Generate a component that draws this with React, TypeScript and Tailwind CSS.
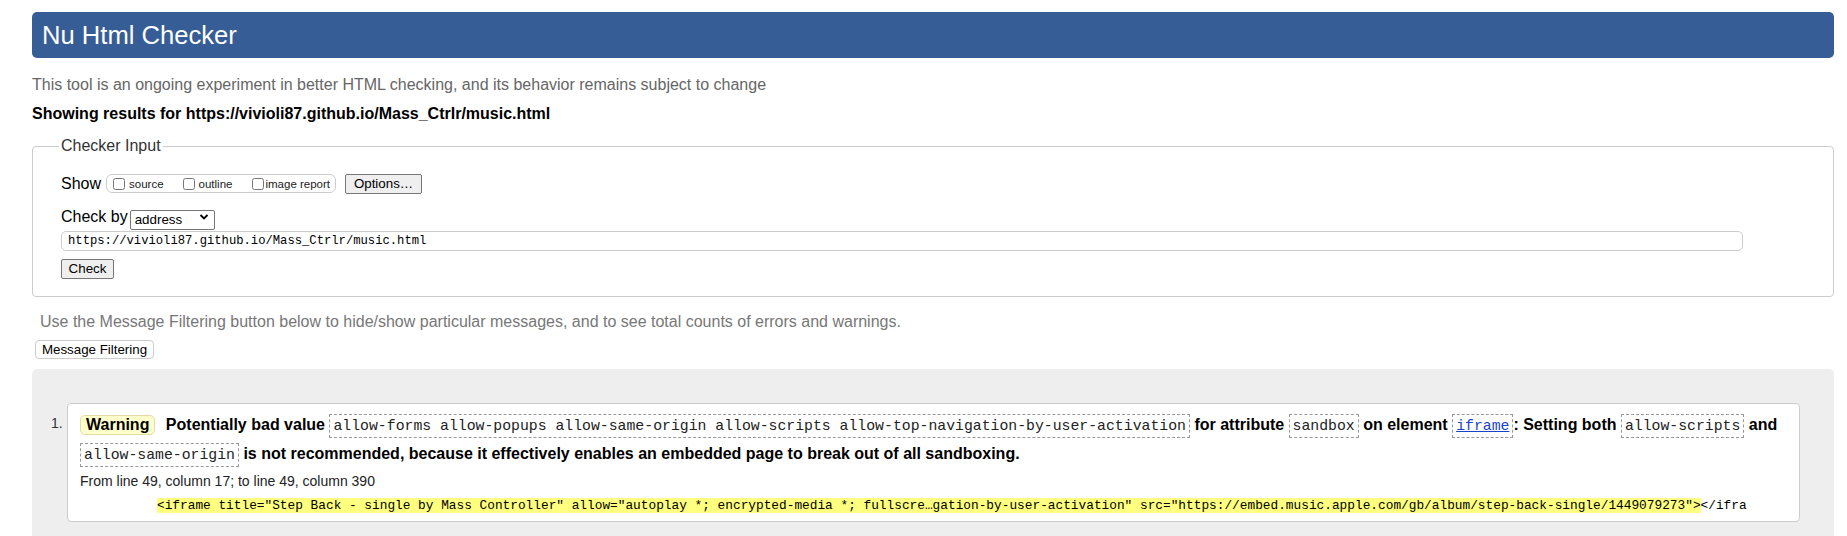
import React from 'react';

// ── Small pieces ──────────────────────────────────────────────────────────────

const Code: React.FC<{ children: React.ReactNode }> = ({ children }) => (
  <code className="border border-dashed border-[#999] bg-white px-[3px] py-[3px] font-['Liberation_Mono',monospace] text-[14.8px] font-normal text-[#222]">
    {children}
  </code>
);

const NativeButton: React.FC<{ children: React.ReactNode; className?: string }> = ({ children, className }) => (
  <button
    type="button"
    className={`h-[20px] border border-[#767676] bg-[#efefef] rounded-[2px] px-[6px] text-[13.33px] leading-[18px] text-black ${className ?? ''}`}
  >
    {children}
  </button>
);

const Check: React.FC<{ label: string; gap: string }> = ({ label, gap }) => (
  <label className={`flex items-center ${gap}`}>
    <input type="checkbox" className="w-[12px] h-[12px]" />
    <span className="text-[11.5px] leading-[14px]">{label}</span>
  </label>
);

// ── Page ──────────────────────────────────────────────────────────────────────

export default function App() {
  return (
    <div className="min-h-screen bg-white font-['Liberation_Sans',Arial,sans-serif] text-[#222]">
      <div className="ml-[32px] mr-[13px] pt-[12px]">
        <h1 className="h-[46px] rounded-[5px] bg-[#365d95] pl-[10px] text-[25.6px] leading-[46px] font-normal text-white">
          Nu Html Checker
        </h1>

        <p className="mt-[17px] text-[16px] leading-[20px] text-[#666]">
          This tool is an ongoing experiment in better HTML checking, and its behavior remains subject to change
        </p>
        <p className="mt-[9px] text-[16px] leading-[20px] font-bold text-black">
          Showing results for https://vivioli87.github.io/Mass_Ctrlr/music.html
        </p>

        {/* Checker input */}
        <fieldset className="mt-[12px] rounded-[4px] border border-[#ccc] pl-[28px] pb-[17px]">
          <legend className="-ml-[2px] px-[2px] text-[16px] leading-[20px] text-[#333]">Checker Input</legend>

          <div className="mt-[17px] flex h-[21px] items-center">
            <span className="text-[16px] leading-[20px] text-black">Show</span>
            <div className="ml-[5px] flex h-[19px] items-center rounded-[6px] border border-[#ccc] pl-[6px] pr-[5px]">
              <Check label="source" gap="gap-[4px]" />
              <div className="ml-[19px]">
                <Check label="outline" gap="gap-[4px]" />
              </div>
              <div className="ml-[20px]">
                <Check label="image report" gap="gap-[1px]" />
              </div>
            </div>
            <NativeButton className="ml-[9px] w-[77px]">Options…</NativeButton>
          </div>

          <div className="mt-[13px] flex h-[20px] items-center">
            <span className="text-[16px] leading-[20px] text-black">Check by</span>
            <div className="relative ml-[2px] h-[20px] w-[85px]">
              <select className="h-[20px] w-full appearance-none rounded-[2px] border border-[#767676] bg-white pl-[4px] text-[13.33px] leading-[18px] text-black">
                <option>address</option>
              </select>
              <svg className="pointer-events-none absolute right-[6px] top-[6px]" width="10" height="8" viewBox="0 0 10 8">
                <path d="M1.5 2 L5 5.5 L8.5 2" fill="none" stroke="#000" strokeWidth="1.8" />
              </svg>
            </div>
          </div>

          <div className="mt-[4px] h-[20px] w-[1682px] rounded-[5px] border border-[#ccc] pl-[6px] font-['Liberation_Mono',monospace] text-[12.2px] leading-[18px] text-black">
            https://vivioli87.github.io/Mass_Ctrlr/music.html
          </div>

          <NativeButton className="mt-[8px] block w-[53px]">Check</NativeButton>
        </fieldset>

        <p className="mt-[15px] ml-[8px] text-[16px] leading-[20px] text-[#777]">
          Use the Message Filtering button below to hide/show particular messages, and to see total counts of errors and warnings.
        </p>
        <button
          type="button"
          className="mt-[8px] ml-[3px] block h-[19px] w-[119px] rounded-[4px] border border-[#ccc] bg-white text-[13.33px] leading-[17px] text-black"
        >
          Message Filtering
        </button>

        {/* Results */}
        <div className="mt-[10px] rounded-t-[5px] bg-[#eee] pt-[34px] pr-[34px] pb-[40px]">
          <div className="flex">
            <span className="w-[35px] pl-[19px] pt-[6px] text-[14px] leading-[28px] text-[#333]">1.</span>
            <div className="flex-1 rounded-[4px] border border-[#ccc] bg-white pl-[12px] pr-[12px] pt-[7px] pb-[5px]">
              <p className="text-[16px] leading-[28px] font-bold text-black">
                <span className="mr-[6px] inline-block rounded-[5px] border border-[#e4dca6] bg-[#ffffcc] px-[5px] leading-[18px]">
                  Warning
                </span>{' '}
                Potentially bad value{' '}
                <Code>allow-forms allow-popups allow-same-origin allow-scripts allow-top-navigation-by-user-activation</Code>{' '}
                for attribute <Code>sandbox</Code> on element{' '}
                <Code>
                  <a href="#" className="text-[#1a44c8] underline">iframe</a>
                </Code>
                : Setting both <Code>allow-scripts</Code> and <Code>allow-same-origin</Code> is not recommended, because it
                effectively enables an embedded page to break out of all sandboxing.
              </p>
              <p className="mt-[2px] text-[14px] leading-[20px] text-[#222]">
                From line 49, column 17; to line 49, column 390
              </p>
              <p className="mt-[5px] whitespace-nowrap pl-[77px] font-['Liberation_Mono',monospace] text-[12.8px] leading-[20px] text-black">
                <span className="bg-[#ffff80]">
                  {'<iframe title="Step Back - single by Mass Controller" allow="autoplay *; encrypted-media *; fullscre…gation-by-user-activation" src="https://embed.music.apple.com/gb/album/step-back-single/1449079273">'}
                </span>
                {'</ifra'}
              </p>
            </div>
          </div>
        </div>
      </div>
    </div>
  );
}
